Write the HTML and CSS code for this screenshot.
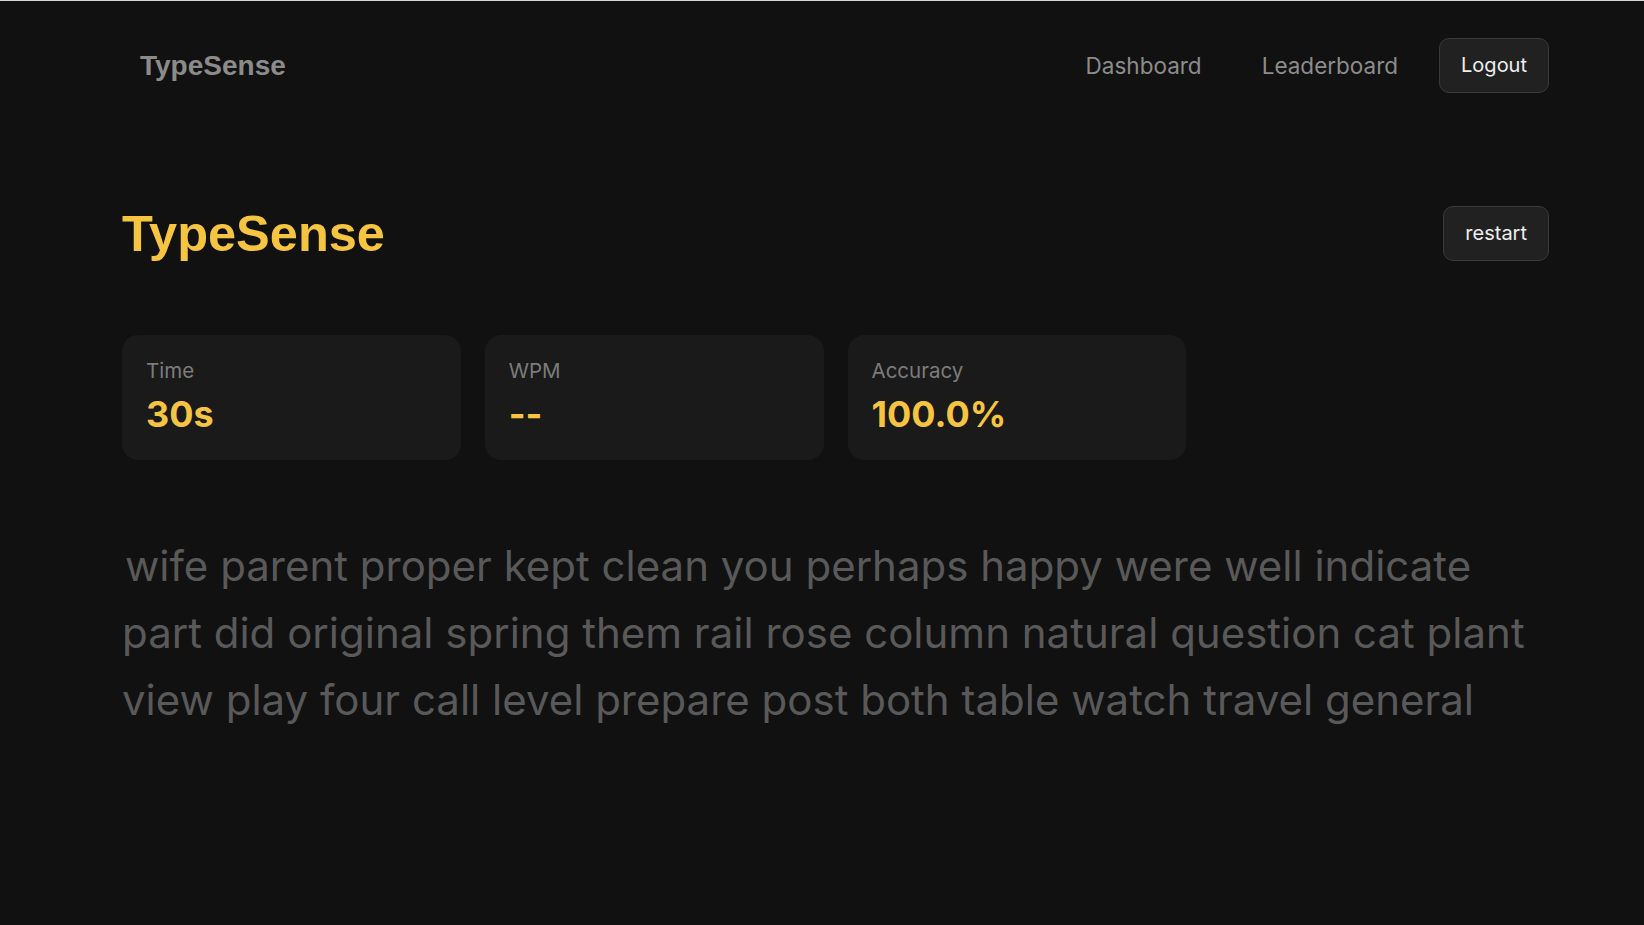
FILE: index.html
```html
<!DOCTYPE html>
<html lang="en">
<head>
    <meta charset="UTF-8">
    <meta name="viewport" content="width=device-width, initial-scale=1.0">
    <title>TypeSense</title>
    <link rel="stylesheet" href="styles.css">
</head>
<body>
    <nav class="navbar">
        <div class="logo">TypeSense</div>
        <div class="nav-links">
            <a href="#" class="nav-link">Dashboard</a>
            <a href="#" class="nav-link">Leaderboard</a>
            <button type="button" class="btn">Logout</button>
        </div>
    </nav>

    <div class="container">
        <div class="title-row">
            <h1>TypeSense</h1>
            <button type="button" class="btn" id="restartButton">restart</button>
        </div>

        <div class="stats">
            <div class="stat-card">
                <div class="stat-label">Time</div>
                <div class="stat-value">30s</div>
            </div>
            <div class="stat-card">
                <div class="stat-label">WPM</div>
                <div class="stat-value">--</div>
            </div>
            <div class="stat-card">
                <div class="stat-label">Accuracy</div>
                <div class="stat-value">100.0%</div>
            </div>
        </div>

        <div class="words" id="words">wife parent proper kept clean you perhaps happy were well indicate part did original spring them rail rose column natural question cat plant view play four call level prepare post both table watch travel general</div>
    </div>
</body>
</html>
```

FILE: styles.css
```css
body {
    font-family: Inter, "Noto Sans", sans-serif;
    margin: 0;
    padding: 0;
    background-color: #111111;
    border-top: 1px solid #d9d9d9;
    color: #e6e6e6;
    height: 924px;
    overflow: hidden;
}
.navbar {
    display: flex;
    justify-content: space-between;
    align-items: center;
    padding: 37px 95px 0 140px;
}
.logo {
    font-family: "Liberation Sans", Arial, sans-serif;
    font-size: 28px;
    font-weight: 700;
    color: #8b8b8b;
}
.nav-links {
    display: flex;
    align-items: center;
}
.nav-link {
    color: #8c8c8c;
    text-decoration: none;
    font-size: 22.5px;
    margin-right: 60px;
}
.nav-link:last-of-type {
    margin-right: 41px;
}
.btn {
    font-family: Inter, "Noto Sans", sans-serif;
    font-size: 20px;
    line-height: 25px;
    padding: 14px 21px;
    background-color: #212121;
    color: #eeeeee;
    border: 1px solid #3a3a3a;
    border-radius: 10px;
    cursor: pointer;
}
.container {
    padding: 0 95px 0 122px;
}
.title-row {
    display: flex;
    justify-content: space-between;
    align-items: center;
    margin-top: 111px;
}
.title-row h1 {
    margin: 0;
    font-family: "Liberation Sans", Arial, sans-serif;
    font-size: 50.5px;
    font-weight: 700;
    color: #f5c542;
}
.stats {
    display: grid;
    grid-template-columns: repeat(4, 1fr);
    gap: 24px;
    margin-top: 72px;
}
.stat-card {
    background-color: #1a1a1a;
    border-radius: 16px;
    padding: 21px 24px;
    height: 125px;
    box-sizing: border-box;
}
.stat-label {
    font-size: 20.5px;
    line-height: 30px;
    color: #7c7c7c;
}
.stat-value {
    font-size: 36px;
    font-weight: 700;
    line-height: 44px;
    margin-top: 6px;
    color: #f5c542;
}
.words {
    margin-top: 72px;
    font-size: 42px;
    line-height: 1.6;
    text-indent: 3px;
    color: #595959;
}
```
